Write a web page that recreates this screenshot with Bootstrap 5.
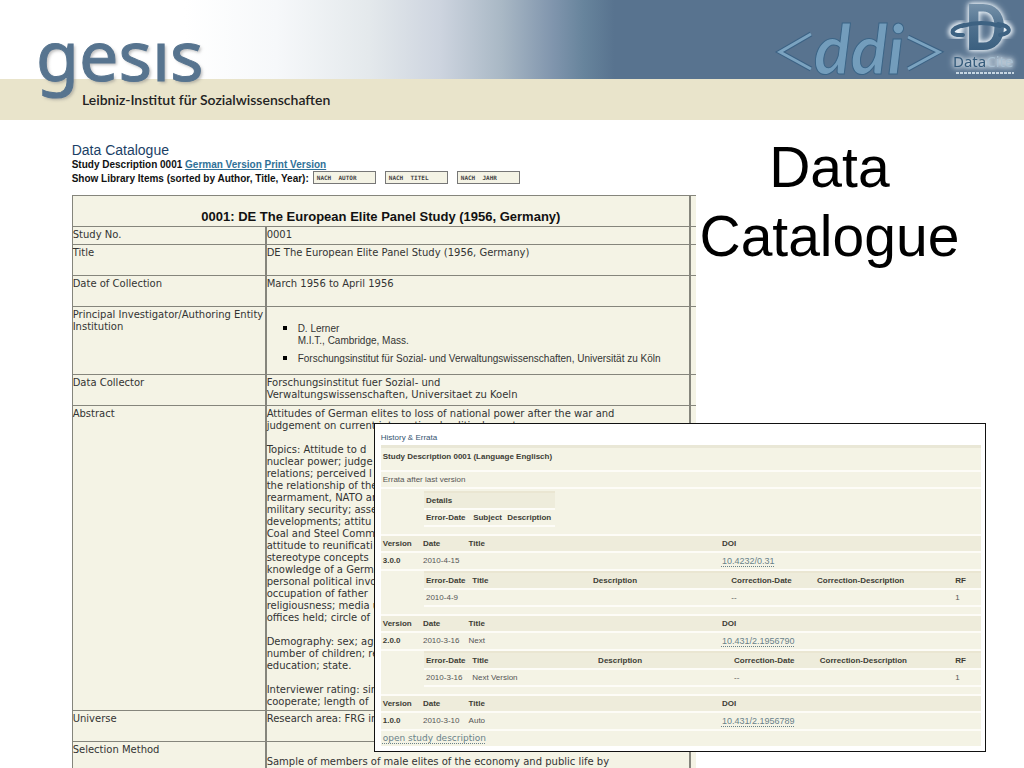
<!DOCTYPE html>
<html lang="en">
<head>
<meta charset="utf-8">
<meta name="viewport" content="width=device-width, initial-scale=1">
<title>Data Catalogue</title>
<link href="https://cdn.jsdelivr.net/npm/bootstrap@5.3.0/dist/css/bootstrap.min.css" rel="stylesheet">
<style>
:root { --sand: #f4f3e5; --rule: #85857c; }
body { font-family: "Liberation Sans", Arial, sans-serif; color: #222; background: #fff; }

/* Banner */
.banner {
  height: 120px;
  background:
    linear-gradient(#e9e4cb, #e9e4cb) 0 100% / 100% 41px no-repeat,
    linear-gradient(90deg, #fff 18%, #f6f8fa 27%, #e4e9ec 36%, #cdd4df 43%, #a9b8c5 49%, #8095ad 54%, #67849c 57%, #58738f 60%);
}
.brand { padding-left: 36px; line-height: 1; }
.brand-name { font-family: "Noto Sans", sans-serif; font-size: 70px; line-height: 80px; padding-top: 14px; height: 93px; color: #57748f; -webkit-text-stroke: 1px #57748f; text-shadow: 2px 2px 3px #8888; }
.brand-line { font-family: Lato, sans-serif; font-size: 14px; font-weight: 600; line-height: 14px; padding-left: 46px; color: #222; }
.partners { width: 250px; height: 79px; }
.halo { filter: drop-shadow(0 0 2px #e8f0f6) drop-shadow(0 0 3px #e8f0f6); }

/* Catalogue page */
.catalogue { width: 61%; margin-left: 7%; padding-top: 22px; }
.slide-title { width: 26%; padding-top: 13px; font-size: 57px; line-height: 69px; color: #000; }
.cat-title { font-size: 14px; line-height: 16px; color: #1b3f66; }
.cat-line { font-size: 10px; line-height: 13px; font-weight: 700; color: #111; }
.cat-tools { line-height: 16px; }
.cat-line a { color: #2f7198; }
.sort-btn { width: 63px; height: 13px; margin-right: 9px; padding: 0 0 0 3px; border: 1px solid #777; border-radius: 0; background: var(--sand); font: 700 6px/10px "DejaVu Sans Mono", monospace; text-align: left; white-space: pre; color: #444; }

.study { width: 100%; margin-top: 8px; table-layout: fixed; border-collapse: collapse; background: var(--sand); font-family: "DejaVu Sans", sans-serif; font-size: 10px; line-height: 12px; color: #333; }
.study th, .study td { border: 1px solid var(--rule); border-right-width: 2px; padding: 2px 0 2px; vertical-align: top; font-weight: 400; text-align: left; overflow-wrap: break-word; }
.study th:last-child, .study td:last-child { border-right: 0; }
.study .head th { height: 31px; padding: 14px 0 2px; text-align: center; font: 700 13px/14px "Liberation Sans", Arial, sans-serif; color: #111; }
.study .tall > * { height: 31px; }
.study .short > * { height: 18px; }
.study .long > * { height: 305px; }
.study .people > * { height: 68px; }
.study .last > * { border-bottom: 0; padding-bottom: 0; }
.study p { margin: 0 0 12px; }
.study ul { list-style: square; margin: 12px 0 0; padding-left: 31px; font: 10px/12px "Liberation Sans", Arial, sans-serif; }
.study li + li { margin-top: 4px; }
.study li::marker { font-size: 14px; color: #000; }
.c-label { width: 31%; } .c-value { width: 68%; }

/* Errata window lying over the catalogue */
.errata { position: absolute; top: 303px; left: 36.5%; width: 59.8%; padding: 6px 4px 5px 6px; border: 1px solid #111; background: #fff; font-size: 8px; line-height: 12px; color: #555; }
.errata h2 { margin: 0; font-size: 8px; line-height: 15px; color: #33536f; font-weight: 400; }
.errata table { width: 100%; table-layout: fixed; border-collapse: separate; border-spacing: 0; }
.errata th, .errata td { padding: 0 0 0 2px; border-bottom: 2px solid #fdfcf7; background: var(--sand); vertical-align: middle; text-align: left; white-space: nowrap; }
.errata th { color: #3d3d35; }
.errata thead th { background: #eeecdb; }
.errata a { font-size: 9px; color: #6a8289; text-decoration: underline dotted; text-underline-offset: 2px; }
.errata .hold { padding: 0 0 7px 3px; }
.errata .bar > * { height: 17px; }
.errata .row-v > * { height: 18px; }
.errata .sub thead th { height: 19px; border-top: 2px solid #eae6d2; }
.errata .sub td { height: 17px; }
.errata .intro th { height: 27px; padding-bottom: 5px; border-top: 3px solid #e9e7d6; }
.errata .details { width: 131px; margin-top: 2px; }
.errata .foot td { height: 15px; border-bottom: 0; font-family: "DejaVu Sans", sans-serif; }
.v1 { width: 6.7%; } .v2 { width: 7.6%; } .v3 { width: 42.2%; }
.s1 { width: 8.3%; } .s2 { width: 21.7%; } .s3 { width: 24.8%; } .s4 { width: 15.4%; } .s5 { width: 24.8%; }
.wide .s2 { width: 22.6%; } .wide .s3 { width: 24.4%; } .wide .s5 { width: 24.3%; }
</style>
</head>
<body class="min-vh-100 overflow-x-hidden">

<header class="banner d-flex justify-content-between align-items-start">
  <div class="brand">
    <div class="brand-name" aria-label="gesis">gesıs</div>
    <div class="brand-line">Leibniz-Institut für Sozialwissenschaften</div>
  </div>
  <svg class="partners flex-shrink-0" viewBox="0 0 250 79" role="img" aria-label="ddi and DataCite">
    <defs>
      <filter id="glow" x="-30%" y="-30%" width="160%" height="160%"><feGaussianBlur stdDeviation="2"/></filter>
      <linearGradient id="metal" x1="0" y1="0" x2="0" y2="1"><stop offset="0" stop-color="#8ba3b8"/><stop offset=".5" stop-color="#4d6f8d"/><stop offset="1" stop-color="#2e5475"/></linearGradient>
    </defs>
    <g fill="none" stroke-linejoin="miter">
      <path d="M37 34 6 52 37 69M134 37l31 15-31 17" stroke="#3c6284" stroke-width="5"/>
      <path d="M37 34 6 52 37 69M134 37l31 15-31 17" stroke="#7ba3c0" stroke-width="3"/>
    </g>
    <text x="40" y="74" font-family="Lato,sans-serif" font-style="italic" font-weight="700" font-size="68" fill="#739dbc" stroke="#3b6486" stroke-width="1">ddi</text>
    <path d="M190 25c-14 3-16 11-1 10M224 24c13 2 15 9 2 11" fill="none" stroke="#e8f0f6" stroke-width="9" filter="url(#glow)"/>
    <text class="halo" x="191" y="50" font-family="Roboto,sans-serif" font-size="64" font-weight="700" fill="url(#metal)">D</text>
    <g fill="none" stroke="#3d6282" stroke-width="4" stroke-linecap="round">
      <path d="M190 25c-14 3-16 11-1 10M224 24c13 2 15 9 2 11M188 26q20-6 38 0"/>
    </g>
    <path d="M182 73h58" stroke="#c5d5e1" stroke-width="2" stroke-dasharray="3 1"/>
    <text class="halo" x="179" y="67" font-family="'Noto Sans',sans-serif" font-size="15" fill="#345a7a">Data<tspan fill="#a9c0d2">Cite</tspan></text>
  </svg>
</header>

<main class="position-relative d-flex align-items-start">
  <section class="catalogue">
    <div class="cat-title">Data Catalogue</div>
    <div class="cat-line">Study Description 0001 <a href="#german">German Version</a> <a href="#print">Print Version</a></div>
    <div class="cat-line cat-tools d-flex align-items-start">
      <span class="me-1">Show Library Items (sorted by Author, Title, Year):</span>
      <button type="button" class="sort-btn">NACH  AUTOR</button>
      <button type="button" class="sort-btn">NACH  TITEL</button>
      <button type="button" class="sort-btn">NACH  JAHR</button>
    </div>

    <table class="study">
      <colgroup><col class="c-label"><col class="c-value"><col></colgroup>
      <thead>
        <tr class="head"><th colspan="2">0001: DE The European Elite Panel Study (1956, Germany)</th><th></th></tr>
      </thead>
      <tbody>
        <tr class="short"><th scope="row">Study No.</th><td>0001</td><td></td></tr>
        <tr class="tall"><th scope="row">Title</th><td>DE The European Elite Panel Study (1956, Germany)</td><td></td></tr>
        <tr class="tall"><th scope="row">Date of Collection</th><td>March 1956 to April 1956</td><td></td></tr>
        <tr class="people"><th scope="row">Principal Investigator/Authoring Entity Institution</th>
          <td><ul><li>D. Lerner<br>M.I.T., Cambridge, Mass.</li><li>Forschungsinstitut für Sozial- und Verwaltungswissenschaften, Universität zu Köln</li></ul></td><td></td></tr>
        <tr class="tall"><th scope="row">Data Collector</th><td>Forschungsinstitut fuer Sozial- und<br>Verwaltungswissenschaften, Universitaet zu Koeln</td><td></td></tr>
        <tr class="long"><th scope="row">Abstract</th>
          <td>
            <p>Attitudes of German elites to loss of national power after the war and<br>judgement on current international political events.</p>
            <p>Topics: Attitude to d<br>nuclear power; judge<br>relations; perceived l<br>the relationship of the<br>rearmament, NATO an<br>military security; asse<br>developments; attitu<br>Coal and Steel Comm<br>attitude to reunificati<br>stereotype concepts<br>knowledge of a Germa<br>personal political invo<br>occupation of father<br>religiousness; media u<br>offices held; circle of</p>
            <p>Demography: sex; ag<br>number of children; re<br>education; state.</p>
            <p class="mb-0">Interviewer rating: sin<br>cooperate; length of</p>
          </td><td></td></tr>
        <tr class="tall"><th scope="row">Universe</th><td>Research area: FRG in</td><td></td></tr>
        <tr class="last"><th scope="row">Selection Method</th><td><br>Sample of members of male elites of the economy and public life by</td><td></td></tr>
      </tbody>
    </table>
  </section>

  <h1 class="slide-title text-center mb-0 fw-normal">Data Catalogue</h1>

  <section class="errata">
    <h2>History &amp; Errata</h2>
    <table>
      <colgroup><col class="v1"><col class="v2"><col class="v3"><col></colgroup>
      <tbody>
        <tr class="intro"><th colspan="4">Study Description 0001 (Language Englisch)</th></tr>
        <tr class="bar"><td colspan="4">Errata after last version</td></tr>
        <tr><td></td><td colspan="3" class="hold">
          <table class="details sub">
            <colgroup><col style="width:36%"><col style="width:26%"><col></colgroup>
            <thead><tr><th colspan="3">Details</th></tr></thead>
            <tbody><tr class="bar"><th>Error-Date</th><th>Subject</th><th>Description</th></tr></tbody>
          </table></td></tr>
      </tbody>
    </table>
    <table>
      <colgroup><col class="v1"><col class="v2"><col class="v3"><col></colgroup>
      <thead><tr class="bar"><th>Version</th><th>Date</th><th>Title</th><th>DOI</th></tr></thead>
      <tbody>
        <tr class="row-v"><th>3.0.0</th><td>2010-4-15</td><td></td><td><a href="#v3">10.4232/0.31</a></td></tr>
        <tr><td></td><td colspan="3" class="hold">
          <table class="sub">
            <colgroup><col class="s1"><col class="s2"><col class="s3"><col class="s4"><col class="s5"><col></colgroup>
            <thead><tr><th>Error-Date</th><th>Title</th><th>Description</th><th>Correction-Date</th><th>Correction-Description</th><th>RF</th></tr></thead>
            <tbody><tr><td>2010-4-9</td><td></td><td></td><td>--</td><td></td><td>1</td></tr></tbody>
          </table></td></tr>
      </tbody>
    </table>
    <table>
      <colgroup><col class="v1"><col class="v2"><col class="v3"><col></colgroup>
      <thead><tr class="bar"><th>Version</th><th>Date</th><th>Title</th><th>DOI</th></tr></thead>
      <tbody>
        <tr class="row-v"><th>2.0.0</th><td>2010-3-16</td><td>Next</td><td><a href="#v2">10.431/2.1956790</a></td></tr>
        <tr><td></td><td colspan="3" class="hold">
          <table class="sub wide">
            <colgroup><col class="s1"><col class="s2"><col class="s3"><col class="s4"><col class="s5"><col></colgroup>
            <thead><tr><th>Error-Date</th><th>Title</th><th>Description</th><th>Correction-Date</th><th>Correction-Description</th><th>RF</th></tr></thead>
            <tbody><tr><td>2010-3-16</td><td>Next Version</td><td></td><td>--</td><td></td><td>1</td></tr></tbody>
          </table></td></tr>
      </tbody>
    </table>
    <table>
      <colgroup><col class="v1"><col class="v2"><col class="v3"><col></colgroup>
      <thead><tr class="bar"><th>Version</th><th>Date</th><th>Title</th><th>DOI</th></tr></thead>
      <tbody>
        <tr class="row-v"><th>1.0.0</th><td>2010-3-10</td><td>Auto</td><td><a href="#v1">10.431/2.1956789</a></td></tr>
        <tr class="foot"><td colspan="4"><a href="#study">open study description</a></td></tr>
      </tbody>
    </table>
  </section>
</main>

<script src="https://cdn.jsdelivr.net/npm/bootstrap@5.3.0/dist/js/bootstrap.bundle.min.js"></script>
</body>
</html>
